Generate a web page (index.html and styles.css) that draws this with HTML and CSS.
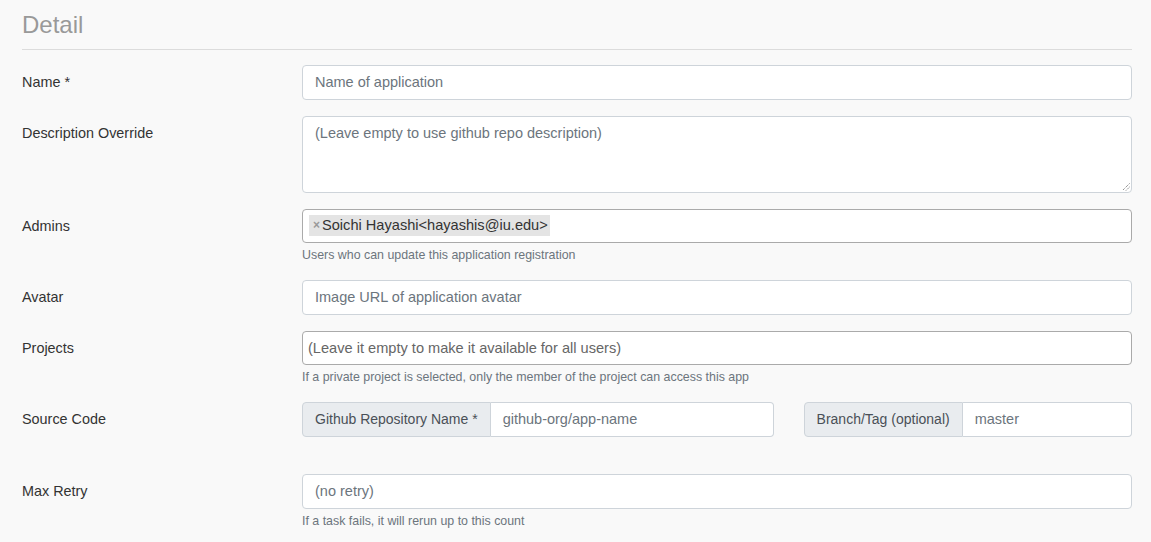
FILE: index.html
```html
<!DOCTYPE html>
<html>
<head>
<meta charset="utf-8">
<link rel="stylesheet" href="styles.css">
</head>
<body>
<div class="page">
  <h3 class="section-title">Detail</h3>
  <hr class="divider">

  <div class="form-row">
    <label class="form-label">Name *</label>
    <div class="field">
      <div class="form-control placeholder">Name of application</div>
    </div>
  </div>

  <div class="form-row">
    <label class="form-label">Description Override</label>
    <div class="field">
      <div class="form-control textarea placeholder">(Leave empty to use github repo description)
        <svg class="resize" width="9" height="9" viewBox="0 0 9 9"><path d="M8.5 1.5 L1.5 8.5 M8.5 5 L5 8.5" stroke="#666" stroke-width="1" stroke-dasharray="1 1" fill="none"/></svg>
      </div>
    </div>
  </div>

  <div class="form-row">
    <label class="form-label">Admins</label>
    <div class="field">
      <div class="select2 multi">
        <span class="tag"><span class="tag-x">×</span>Soichi Hayashi&lt;hayashis@iu.edu&gt;</span>
      </div>
      <small class="help">Users who can update this application registration</small>
    </div>
  </div>

  <div class="form-row">
    <label class="form-label">Avatar</label>
    <div class="field">
      <div class="form-control placeholder">Image URL of application avatar</div>
    </div>
  </div>

  <div class="form-row">
    <label class="form-label">Projects</label>
    <div class="field">
      <div class="select2 single">(Leave it empty to make it available for all users)</div>
      <small class="help">If a private project is selected, only the member of the project can access this app</small>
    </div>
  </div>

  <div class="form-row source">
    <label class="form-label">Source Code</label>
    <div class="field groups">
      <div class="input-group">
        <span class="addon">Github Repository Name *</span>
        <span class="group-input placeholder">github-org/app-name</span>
      </div>
      <div class="input-group">
        <span class="addon">Branch/Tag (optional)</span>
        <span class="group-input placeholder">master</span>
      </div>
    </div>
  </div>

  <div class="form-row">
    <label class="form-label">Max Retry</label>
    <div class="field">
      <div class="form-control placeholder">(no retry)</div>
      <small class="help">If a task fails, it will rerun up to this count</small>
    </div>
  </div>
</div>
</body>
</html>
```

FILE: styles.css
```css
* { box-sizing: border-box; }
html, body {
  margin: 0;
  padding: 0;
  background: #f9f9f9;
}
body {
  font-family: "Liberation Sans", Arial, sans-serif;
  font-size: 14px;
  line-height: 1.5;
  color: #212529;
}
.page {
  padding: 10px 19px 0 22px;
}
.section-title {
  margin: 0;
  font-size: 24px;
  font-weight: 400;
  line-height: 29px;
  color: #999;
}
.divider {
  margin: 10px 0 15px 0;
  border: 0;
  border-top: 1px solid #dcdcdc;
  height: 0;
}
.form-row {
  display: grid;
  grid-template-columns: 280px 1fr;
  margin-bottom: 16px;
}
.form-row.source {
  margin-bottom: 37px;
}
.form-label {
  padding-top: 7px;
  font-size: 14.4px;
  line-height: 21px;
  color: #333;
}
.field {
  display: flex;
  flex-direction: column;
  min-width: 0;
}
.form-control {
  position: relative;
  height: 35px;
  padding: 6px 12px;
  background: #fff;
  border: 1px solid #ced4da;
  border-radius: 4px;
  font-size: 14.5px;
  line-height: 21px;
  color: #495057;
}
.placeholder { color: #6c757d; }
.textarea {
  height: 77px;
}
.resize {
  position: absolute;
  right: 1px;
  bottom: 1px;
}
.select2 {
  height: 34px;
  background: #fff;
  border: 1px solid #aaa;
  border-radius: 4px;
}
.multi {
  padding: 5px 6px;
  display: flex;
  align-items: flex-start;
}
.tag {
  display: inline-flex;
  align-items: center;
  height: 21px;
  padding: 0 2px 0 4px;
  background: #e4e4e4;
  color: #333;
  font-size: 14.6px;
  line-height: 21px;
}
.tag-x {
  color: #999;
  font-weight: 700;
  font-size: 12px;
  margin-right: 2px;
}
.single {
  padding: 0 5px;
  line-height: 32px;
  font-size: 14.6px;
  color: #666;
}
.help {
  margin-top: 3px;
  font-size: 12.4px;
  line-height: 18px;
  color: #6c757d;
}
.groups {
  display: grid;
  grid-template-columns: 471fr 328fr;
  column-gap: 30px;
}
.input-group {
  display: flex;
  height: 35px;
}
.addon {
  padding: 6px 12px;
  line-height: 21px;
  background: #e9ecef;
  border: 1px solid #ced4da;
  border-radius: 4px 0 0 4px;
  color: #495057;
  white-space: nowrap;
}
.group-input {
  flex: 1;
  min-width: 0;
  padding: 6px 12px;
  font-size: 14.5px;
  line-height: 21px;
  background: #fff;
  border: 1px solid #ced4da;
  border-left: 0;
  border-radius: 0 4px 4px 0;
}
```
